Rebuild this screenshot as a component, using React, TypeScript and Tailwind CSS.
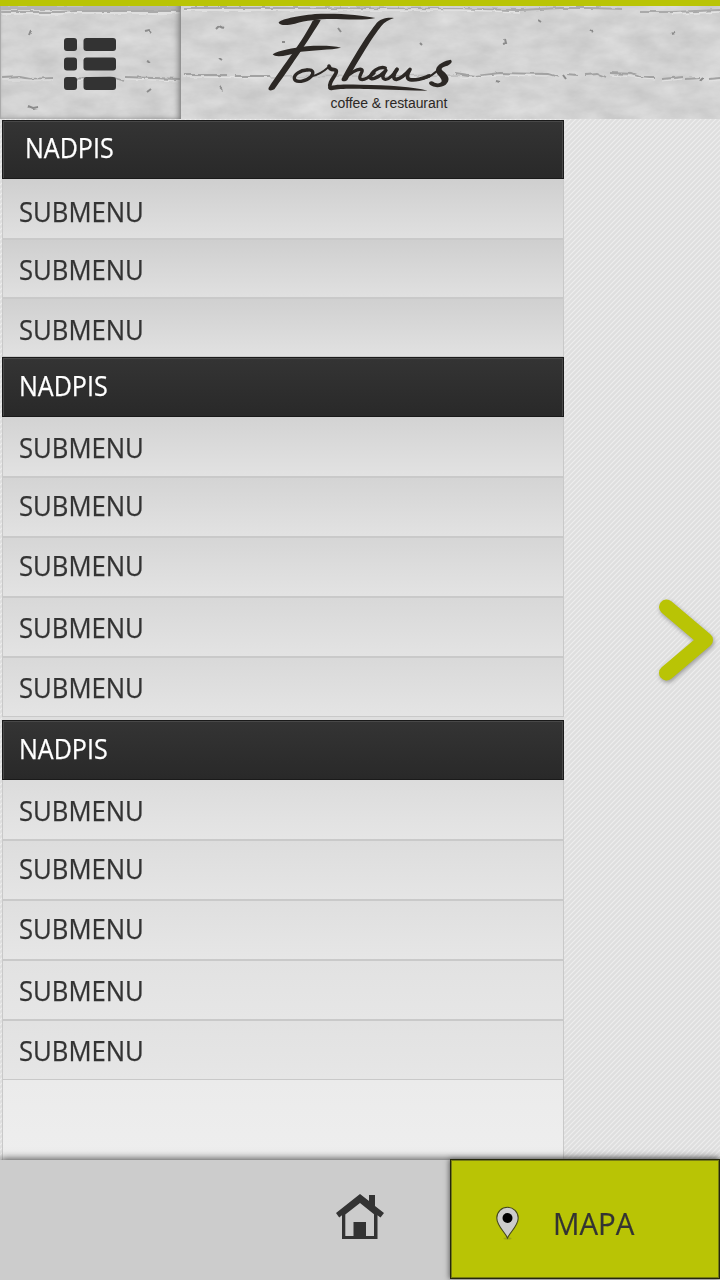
import React from "react";

const FONT = "font-['Open_Sans','Noto_Sans',sans-serif]";

function Stripes() {
  return (
    <svg className="absolute inset-0 h-full w-full" aria-hidden="true">
      <defs>
        <pattern id="stripes" width="5" height="5" patternUnits="userSpaceOnUse">
          <rect width="5" height="5" fill="#dfdfdf" />
          <path d="M-1 6L6 -1M-1 1L1 -1M4 6L6 4" stroke="#eeeeee" strokeWidth="1.1" />
        </pattern>
      </defs>
      <rect width="100%" height="100%" fill="url(#stripes)" />
    </svg>
  );
}

function Concrete() {
  return (
    <svg className="absolute inset-0 h-full w-full" viewBox="0 6 720 113" preserveAspectRatio="none" aria-hidden="true">
      <defs>
        <filter id="grain" x="0" y="0" width="100%" height="100%" colorInterpolationFilters="sRGB">
          <feTurbulence type="fractalNoise" baseFrequency="0.03 0.06" numOctaves="5" seed="8" />
          <feColorMatrix values="0.12 0 0 0 0.765  0.12 0 0 0 0.765  0.12 0 0 0 0.765  0 0 0 0 1" />
        </filter>
        <filter id="rough" x="-5%" y="-50%" width="110%" height="200%" colorInterpolationFilters="sRGB">
          <feTurbulence type="fractalNoise" baseFrequency="0.1" numOctaves="2" seed="3" result="n" />
          <feDisplacementMap in="SourceGraphic" in2="n" scale="4" xChannelSelector="R" yChannelSelector="G" />
          <feGaussianBlur stdDeviation="0.7" />
        </filter>
      </defs>
      <rect y="6" width="720" height="113" fill="#d3d3d3" filter="url(#grain)" />
      <g fill="none" filter="url(#rough)">
        <path d="M0 8H180" stroke="#b2b2b2" strokeWidth="4" />
        <path d="M2 12H60L75 11L180 11M184 8H270L460 9L520 10L560 8L590 8L623 9M640 12L672 12L720 10" stroke="#aaaaaa" strokeWidth="2" />
        <path d="M2 14H60L75 13L180 13M184 10H460L520 12M672 14L720 12" stroke="#e4e4e4" strokeWidth="1.3" />
        <path d="M2 78L20 77L30 79L54 78M64 79L90 78L110 77L125 81M126 77L180 79M184 75L228 75M236 76L270 76M455 73L475 76L500 73L548 74L558 77M567 75L578 76M585 75L598 74L606 77M610 73L632 74L640 77L655 77M662 79L683 77M686 79L700 78M709 79L720 78" stroke="#a2a2a2" strokeWidth="1.8" />
        <path d="M2 80L54 80M64 81L90 80M126 79L180 81M184 77L270 78M460 78L500 75L548 76M610 75L655 79M662 81L683 79M709 81L720 80" stroke="#e2e2e2" strokeWidth="1.2" />
        <path d="M270 77L460 75" stroke="#bdbdbd" strokeWidth="1.5" />
        <path d="M29 35L31 30M145 31L149 30L152 33M147 61L151 63M147 92L151 89M27 106L32 108L38 107M216 29L219 26L223 28M219 58L222 60M220 87L223 90M338 28L341 32M504 39L505 43L502 44M590 30L593 32M671 34L674 33M496 81L500 82M538 20L541 22M563 75L566 79M700 81L703 78M420 43L422 45M282 42L285 42" stroke="#8b8b8b" strokeWidth="2" />
      </g>
    </svg>
  );
}

function MenuIcon() {
  return (
    <svg className="h-[52px] w-[52px]" viewBox="0 0 52 52" fill="#333" aria-hidden="true">
      {[0, 19.5, 39].map((y) => (
        <g key={y}>
          <rect y={y} width="13" height="13" rx="3" />
          <rect x="19.5" y={y} width="32.5" height="13" rx="3" />
        </g>
      ))}
    </svg>
  );
}

function Logo() {
  return (
    <div className="absolute left-[260px] top-0 h-[119px] w-[200px]">
      <svg className="absolute left-0 top-0 h-[119px] w-[200px]" viewBox="0 0 600 357" aria-label="Forhaus">
        <g fill="#2c2825">
          <path d="M56 68C60 58 110 48 165 42C230 38 310 46 346 54C325 60 285 59 245 58C200 55 145 59 105 71C82 76 60 77 56 68Z" />
          <path d="M158 62C166 57 176 58 182 61C152 112 77 222 43 268C35 273 22 273 26 263C66 200 131 120 158 62Z" />
          <path d="M38 163C58 151 97 144 140 139C185 136 222 138 243 143C215 150 155 150 115 156C83 168 45 174 38 163Z" />
          <path d="M205 262C214 253 248 252 300 254C390 255 460 260 503 272C450 272 390 269 325 267C270 265 238 266 218 270C209 272 203 268 205 262Z" />
          <path d="M402 54C385 60 374 66 364 78C338 110 297 178 262 240C256 246 242 245 245 236C275 179 318 109 346 74C360 55 382 52 402 54Z" />
          <path d="M572 179C579 184 574 193 557 199C545 203 541 207 549 213C568 228 571 241 557 254C543 265 513 264 507 250C507 244 515 242 521 246C530 253 542 251 545 244C547 233 526 222 528 209C530 192 557 181 572 179Z" />
        </g>
        <g fill="none" stroke="#2c2825" strokeLinecap="round" strokeLinejoin="round">
          <path d="M140 210C122 210 101 224 103 236C106 250 138 245 153 230C164 217 157 208 143 210" strokeWidth="10" />
          <path d="M154 229C175 225 190 215 207 200" strokeWidth="6" />
          <path d="M207 198C208 206 212 209 222 209C232 210 231 217 222 230C213 243 207 252 210 262" strokeWidth="11" />
          <path d="M253 236C270 219 292 206 303 208C315 212 292 229 301 237C310 243 327 232 342 219" strokeWidth="10" />
          <path d="M376 204C356 197 334 218 331 230C328 243 355 235 378 211C368 225 364 236 376 238C387 239 400 224 411 208" strokeWidth="10" />
          <path d="M411 208C399 225 398 237 409 238C424 236 437 223 450 208C442 222 438 236 450 239C470 243 485 236 507 228" strokeWidth="11" />
          <path d="M490 236C511 231 526 220 543 201" strokeWidth="6" />
        </g>
      </svg>
      <span className="absolute left-[70.5px] top-[95px] inline-block origin-left whitespace-nowrap font-['Liberation_Sans',sans-serif] text-[14px] leading-4 tracking-[-0.005em] text-[#2c2825]">
        coffee &amp; restaurant
      </span>
    </div>
  );
}

function Heading({ className }: { className: string }) {
  return (
    <div className={`relative w-[562px] shrink-0 border border-[#1a1a1a] bg-linear-to-b from-[#343434] to-[#292929] shadow-[inset_1px_1px_0_#484848,inset_-1px_0_0_#484848] ${className}`}>
      <span className="inline-block origin-left scale-x-[.945] text-[26.5px] leading-[36px] text-white [-webkit-text-stroke:0.25px_#fff]">NADPIS</span>
    </div>
  );
}

function Submenu({ className }: { className: string }) {
  return (
    <div className={`w-[562px] shrink-0 border-x border-[#c9c9c9] bg-linear-to-b pl-[16px] ${className}`}>
      <span className="inline-block origin-left scale-x-[.969] text-[26.5px] leading-[36px] text-[#333] [-webkit-text-stroke:0.25px_#333]">SUBMENU</span>
    </div>
  );
}

export default function App() {
  return (
    <div className={`relative flex h-[1280px] w-[720px] flex-col overflow-hidden ${FONT}`}>
      <Stripes />
      <header className="relative flex h-[119px] shrink-0 border-t-[6px] border-[#b9c405]">
        <Concrete />
        <button className="relative flex h-[113px] w-[181px] items-center justify-center border-l border-[#aaa] pr-[2px] pt-[3px] shadow-[inset_-5px_-2px_6px_-3px_#777,inset_0_1px_3px_#bbb]">
          <MenuIcon />
        </button>
      </header>
      <Logo />
      <main className="relative flex h-[1041px] w-[564px] shrink-0 flex-col pl-[2px] pt-px">
        <Heading className="h-[59px] pl-[22px] pt-[9px]" />
        <Submenu className="h-[61px] border-b-2 from-[#cfcfcf] to-[#e0e0e0] pt-[15px]" />
        <Submenu className="h-[59px] border-b-2 from-[#cfcfcf] to-[#e0e0e0] pt-[12px]" />
        <Submenu className="h-[58px] border-b from-[#d0d0d0] to-[#e1e1e1] pt-[13px]" />
        <Heading className="h-[60px] pl-[16px] pt-[10px]" />
        <Submenu className="h-[61px] border-b-2 from-[#d3d3d3] to-[#e2e2e2] pt-[13px]" />
        <Submenu className="h-[60px] border-b-2 from-[#d4d4d4] to-[#e2e2e2] pt-[10px]" />
        <Submenu className="h-[60px] border-b-2 from-[#d6d6d6] to-[#e3e3e3] pt-[10px]" />
        <Submenu className="h-[60px] border-b-2 from-[#d8d8d8] to-[#e3e3e3] pt-[12px]" />
        <Submenu className="h-[59px] border-b from-[#d9d9d9] to-[#e4e4e4] pt-[12px]" />
        <div className="h-[3px] shrink-0 bg-[#dedede]" />
        <Heading className="h-[60px] pl-[16px] pt-[10px]" />
        <Submenu className="h-[61px] border-b-2 from-[#dcdcdc] to-[#e5e5e5] pt-[13px]" />
        <Submenu className="h-[60px] border-b-2 from-[#dddddd] to-[#e5e5e5] pt-[10px]" />
        <Submenu className="h-[60px] border-b-2 from-[#dfdfdf] to-[#e6e6e6] pt-[10px]" />
        <Submenu className="h-[60px] border-b-2 from-[#e2e2e2] to-[#e6e6e6] pt-[12px]" />
        <Submenu className="h-[59px] border-b from-[#e2e2e2] to-[#e6e6e6] pt-[12px]" />
        <div className="w-[562px] flex-1 border-x border-[#c9c9c9] bg-linear-to-b from-[#ebebeb] to-[#eeeeee]" />
      </main>
      <svg className="absolute left-[640px] top-[580px] h-[120px] w-[80px] drop-shadow-[1px_2px_2px_#999]" viewBox="0 0 80 120" aria-label="Next">
        <path d="M26.5 27L65.5 60L26.5 93" fill="none" stroke="#b9c405" strokeWidth="15" strokeLinecap="round" strokeLinejoin="round" />
      </svg>
      <footer className="relative flex h-[120px] shrink-0 bg-[#cccccc] shadow-[0_-1px_8px_#444]">
        <div className="w-[270px]" />
        <button className="flex w-[180px] items-center justify-center">
          <svg className="mb-[6px] h-[46px] w-[48px]" viewBox="0 0 48 46" fill="#333" aria-label="Home">
            <path d="M24 0L33 7V1H39V12L48 19L44.5 23.5L41.5 21.3V45H6V21.3L3.2 23.5L0 19ZM24 9L9.3 20.5V42H17.5V28H30V42H38V20.3Z" fillRule="evenodd" />
          </svg>
        </button>
        <button className="relative mt-[-1px] flex h-[120px] w-[270px] items-start border border-[#25270c] bg-[#b9c405] shadow-[-1px_0_5px_#666,inset_0_0_0_1px_#777d13]">
          <svg className="ml-[43.5px] mt-[45.5px] h-[34px] w-[25px]" viewBox="0 0 25 34" aria-hidden="true">
            <ellipse cx="12.5" cy="32.5" rx="4" ry="1" fill="#9ca51a" />
            <path d="M12.5 32C10 26 1.8 20 1.8 12A10.7 10.7 0 0 1 23.2 12C23.2 20 15 26 12.5 32Z" fill="#ccc" stroke="#45471b" strokeWidth="1.1" />
            <circle cx="12.5" cy="12" r="5" fill="#000" />
          </svg>
          <span className="ml-[33px] mt-[42px] inline-block origin-left scale-x-[.935] text-[31.5px] leading-[42px] text-[#333] [-webkit-text-stroke:0.2px_#333]">MAPA</span>
        </button>
      </footer>
    </div>
  );
}
